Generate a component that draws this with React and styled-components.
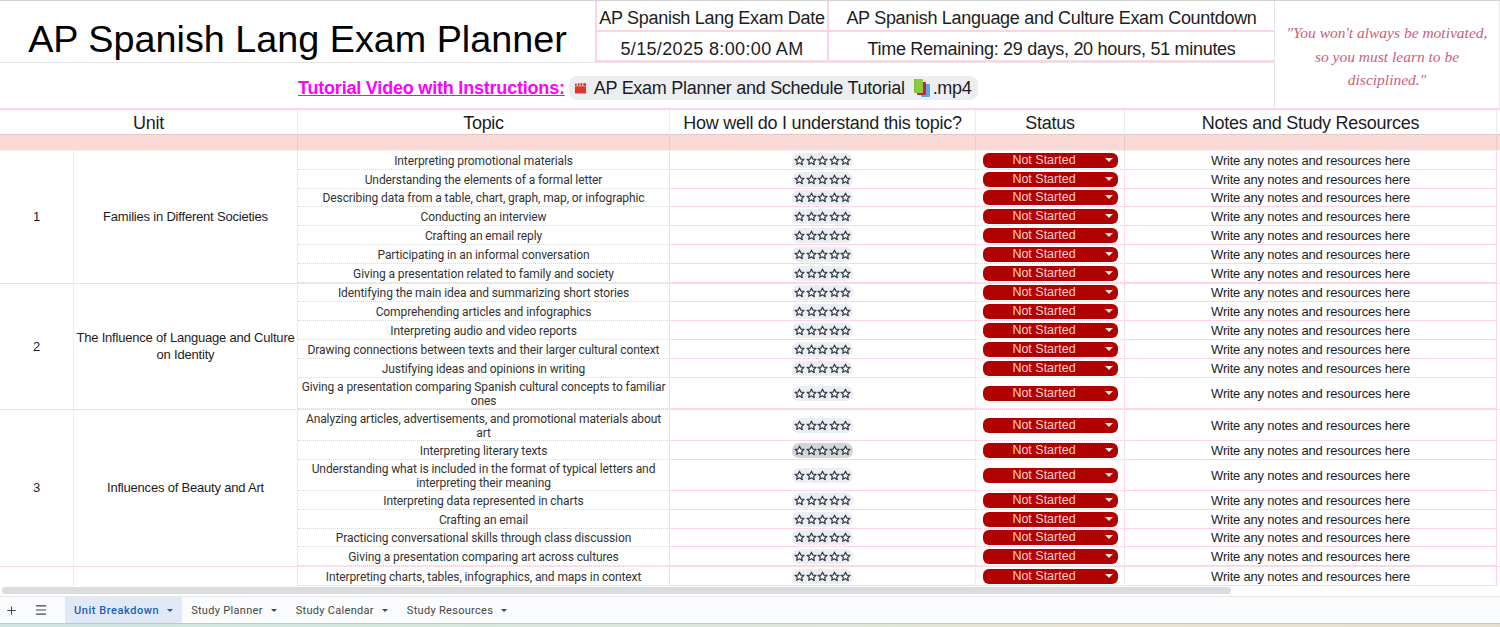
import React from 'react';
import styled, { createGlobalStyle } from 'styled-components';
import { Plus, Menu } from 'lucide-react';

const pink = '#ffd3e3';
const faint = '#ffe3ee';

const GlobalStyle = createGlobalStyle`
  html, body { margin: 0; padding: 0; background: #fff; overflow: hidden; }
  * { box-sizing: border-box; }
`;

const Page = styled.div`
  width: 1500px;
  height: 627px;
  display: flex;
  flex-direction: column;
  overflow: hidden;
  background: #fff;
  color: #1d1d1f;
  font-family: "Liberation Sans", Arial, sans-serif;
  border-top: 1px solid #d3d3d3;
`;

const Top = styled.header`
  display: flex;
  height: 109px;
  flex: none;
  border-bottom: 2px solid ${pink};
`;

const TopLeft = styled.div`
  width: 1274px;
  display: flex;
  flex-direction: column;
`;

const TitleRow = styled.div`
  display: flex;
  height: 62px;
  border-bottom: 1px solid #e6e6e6;
`;

const Title = styled.h1`
  width: 595px;
  margin: 0;
  font-size: 37.75px;
  font-weight: 400;
  line-height: 77px;
  height: 61px;
  text-align: center;
  color: #000;
  white-space: nowrap;
`;

const InfoCol = styled.div`
  display: flex;
  flex-direction: column;
  width: ${p => p.$w}px;
  border-left: 2px solid ${pink};
`;

const InfoCell = styled.div`
  height: 31px;
  line-height: 34px;
  font-size: 18px;
  letter-spacing: ${p => (p.$wide ? 0.35 : -0.3)}px;
  text-align: center;
  white-space: nowrap;
  border-bottom: 2px solid ${pink};
  &:last-child { height: 30px; }
`;

const TutorialRow = styled.div`
  flex: 1;
  display: flex;
  align-items: center;
  padding: 5px 0 0 298px;
  gap: 4px;
`;

const TutorialLink = styled.a`
  color: #ff00ff;
  font-weight: 700;
  font-size: 18px;
  letter-spacing: -0.2px;
  text-decoration: underline;
  white-space: nowrap;
`;

const FileChip = styled.span`
  display: inline-flex;
  align-items: center;
  height: 24px;
  width: 409px;
  padding: 0 5px;
  gap: 7px;
  border-radius: 8px;
  background: #eceef1;
  font-size: 18px;
  letter-spacing: -0.27px;
  white-space: nowrap;
`;

const FileExt = styled.span`
  display: inline-flex;
  align-items: center;
  gap: 1px;
`;

const Quote = styled.blockquote`
  flex: 1;
  margin: 0;
  padding: 20px 6px 0;
  border-left: 1px solid #e6e6e6;
  border-right: 1px solid #e6e6e6;
  font-family: "Liberation Serif", serif;
  font-style: italic;
  font-size: 15.5px;
  line-height: 23.5px;
  color: #c9607c;
  text-align: center;
`;

const tableCols = '298px 372px 306px 149px 372px';

const HeadRow = styled.div`
  display: grid;
  grid-template-columns: ${tableCols};
  height: 25px;
  flex: none;
  border-bottom: 1px solid #e5c8c5;
`;

const HeadCell = styled.div`
  text-align: center;
  font-size: 18px;
  letter-spacing: -0.27px;
  line-height: 27px;
  white-space: nowrap;
  border-right: 1px solid #ececec;
`;

const BandRow = styled.div`
  display: grid;
  grid-template-columns: ${tableCols};
  height: 15px;
  flex: none;
  background: #f9dad7;
`;

const BandCell = styled.div`
  border-right: 1px solid #e8cbc8;
`;

const Body = styled.div`
  flex: none;
  height: 436px;
  overflow: hidden;
  border-top: 1px solid #fbeeed;
`;

const UnitBlock = styled.section`
  display: grid;
  grid-template-columns: 74px 224px 1199px;
  border-bottom: 1px solid #ffd9e6;
`;

const UnitNo = styled.div`
  display: flex;
  align-items: center;
  justify-content: center;
  font-size: 13px;
  border-right: 1px solid ${faint};
`;

const UnitName = styled.div`
  display: flex;
  align-items: center;
  justify-content: center;
  text-align: center;
  font-size: 13px;
  letter-spacing: -0.2px;
  line-height: 17px;
  border-right: 1px solid #e9e9e9;
`;

const Rows = styled.div`
  display: flex;
  flex-direction: column;
`;

const Row = styled.div`
  display: grid;
  grid-template-columns: 372px 306px 149px 372px;
  height: ${p => (p.$tall ? 31.2 : 18.8)}px;
  align-items: stretch;
`;

const Cell = styled.div`
  display: flex;
  align-items: center;
  justify-content: center;
  text-align: center;
  padding-top: 1px;
  border-bottom: 1px solid ${pink};
  border-right: 1px solid ${faint};
`;

const TopicCell = styled(Cell)`
  font-family: Roboto, sans-serif;
  font-size: 12px;
  letter-spacing: -0.1px;
  line-height: 14px;
  color: #333;
  padding: 2px 2px 0;
  border-right: 1px solid #e6e6e6;
  border-bottom: 1px dotted #fbc8da;
`;

const StatusCell = styled(Cell)`
  border-right: 1px dotted #f8c4d8;
  border-bottom: 1px dotted #fbc8da;
`;

const NotesCell = styled(Cell)`
  font-size: 13px;
  letter-spacing: -0.2px;
  color: #1d1d1f;
  white-space: nowrap;
  border-right: 1px solid ${pink};
`;

const Stars = styled.span`
  display: inline-flex;
  align-items: center;
  justify-content: center;
  gap: 0.5px;
  width: 61px;
  height: 15px;
  border-radius: 7px;
  background: ${p => (p.$hover ? '#d3d5d8' : '#eceef1')};
`;

const Status = styled.span`
  position: relative;
  display: block;
  width: 135px;
  height: 15px;
  border-radius: 6px;
  background: #b10202;
  color: #ffcfc9;
  font-size: 12.5px;
  line-height: 15px;
  padding-right: 12px;
  &::after {
    content: '';
    position: absolute;
    right: 5px;
    top: 5px;
    border-left: 4px solid transparent;
    border-right: 4px solid transparent;
    border-top: 4px solid #ffe3df;
  }
`;

const ScrollTrack = styled.div`
  flex: none;
  height: 11px;
  padding: 1px 0 0 2px;
  border-bottom: 1px solid #e8e8e8;
  background: #fff;
`;

const ScrollThumb = styled.div`
  width: 1229px;
  height: 7px;
  border-radius: 4px;
  background: #dadce0;
`;

const TabBar = styled.nav`
  flex: none;
  height: 27px;
  display: flex;
  align-items: stretch;
  background: #f9fbfd;
  border-bottom: 1px solid #c4c7c5;
  font-family: Roboto, sans-serif;
`;

const BarIcon = styled.span`
  display: flex;
  align-items: center;
  justify-content: center;
  width: ${p => p.$w}px;
  margin-right: ${p => p.$gap || 0}px;
  color: #444746;
`;

const Tab = styled.div`
  display: flex;
  align-items: center;
  gap: 8px;
  padding: 0 ${p => (p.$active ? 9 : 8)}px;
  margin-right: ${p => (p.$active ? 1 : 3)}px;
  font-size: 11px;
  font-weight: ${p => (p.$active ? 500 : 400)};
  letter-spacing: ${p => (p.$active ? 0.55 : 0.3)}px;
  white-space: nowrap;
  color: ${p => (p.$active ? '#1b5fb4' : '#444746')};
  background: ${p => (p.$active ? '#e1e9f7' : 'transparent')};
  &::after {
    content: '';
    border-left: 3.5px solid transparent;
    border-right: 3.5px solid transparent;
    border-top: 3.5px solid currentColor;
  }
`;

const Desktop = styled.div`
  flex: 1;
  background: linear-gradient(90deg, #cfe6e2 0%, #dbe6dc 45%, #e8e4d0 75%, #e6dfcf 100%);
`;

const IconWrap = styled.svg`
  flex: none;
`;

const StarIcon = () => (
  <IconWrap width="11" height="11" viewBox="0 0 24 24" fill="#fff" stroke="#2f3a4a" strokeWidth="2.6" strokeLinejoin="round">
    <path d="M12 2.5l2.9 6.3 6.9.8-5.1 4.7 1.4 6.8L12 16.9l-6.1 3.5 1.4-6.8L2.2 9.6l6.9-.8z" />
  </IconWrap>
);

const Clapper = () => (
  <IconWrap width="13" height="14" viewBox="0 0 14 14">
    <rect x="1" y="5" width="12" height="8" rx="1" fill="#d93a2b" />
    <path d="M1 2.5h2v2H1zM4 2h2v2.5H4zM7 2h2v2.5H7zM10 2h3v2.5h-3z" fill="#c9342a" />
  </IconWrap>
);

const Books = () => (
  <IconWrap width="20" height="20" viewBox="0 0 20 20">
    <rect x="9" y="6" width="9" height="13" rx="1" fill="#5aa5e6" />
    <rect x="5" y="4" width="9" height="13" rx="1" fill="#c5233f" />
    <rect x="2" y="1" width="9" height="14" rx="1" fill="#8ccb3f" />
    <path d="M3 1v14" stroke="#6b9e2b" strokeDasharray="1 1" />
  </IconWrap>
);

const units = [
  {
    no: 1,
    name: 'Families in Different Societies',
    topics: [
      'Interpreting promotional materials',
      'Understanding the elements of a formal letter',
      'Describing data from a table, chart, graph, map, or infographic',
      'Conducting an interview',
      'Crafting an email reply',
      'Participating in an informal conversation',
      'Giving a presentation related to family and society',
    ],
  },
  {
    no: 2,
    name: 'The Influence of Language and Culture on Identity',
    topics: [
      'Identifying the main idea and summarizing short stories',
      'Comprehending articles and infographics',
      'Interpreting audio and video reports',
      'Drawing connections between texts and their larger cultural context',
      'Justifying ideas and opinions in writing',
      'Giving a presentation comparing Spanish cultural concepts to familiar ones',
    ],
  },
  {
    no: 3,
    name: 'Influences of Beauty and Art',
    topics: [
      'Analyzing articles, advertisements, and promotional materials about art',
      'Interpreting literary texts',
      'Understanding what is included in the format of typical letters and interpreting their meaning',
      'Interpreting data represented in charts',
      'Crafting an email',
      'Practicing conversational skills through class discussion',
      'Giving a presentation comparing art across cultures',
    ],
  },
  {
    no: '',
    name: '',
    topics: ['Interpreting charts, tables, infographics, and maps in context'],
  },
];

const tabs = ['Unit Breakdown', 'Study Planner', 'Study Calendar', 'Study Resources'];
const headers = ['Unit', 'Topic', 'How well do I understand this topic?', 'Status', 'Notes and Study Resources'];

const App = () => (
  <Page>
    <GlobalStyle />
    <Top>
      <TopLeft>
        <TitleRow>
          <Title>AP Spanish Lang Exam Planner</Title>
          <InfoCol $w={232}>
            <InfoCell>AP Spanish Lang Exam Date</InfoCell>
            <InfoCell $wide>5/15/2025 8:00:00 AM</InfoCell>
          </InfoCol>
          <InfoCol $w={447}>
            <InfoCell>AP Spanish Language and Culture Exam Countdown</InfoCell>
            <InfoCell>Time Remaining: 29 days, 20 hours, 51 minutes</InfoCell>
          </InfoCol>
        </TitleRow>
        <TutorialRow>
          <TutorialLink>Tutorial Video with Instructions: </TutorialLink>
          <FileChip>
            <Clapper />
            AP Exam Planner and Schedule Tutorial
            <FileExt><Books />.mp4</FileExt>
          </FileChip>
        </TutorialRow>
      </TopLeft>
      <Quote>"You won't always be motivated, so you must learn to be disciplined."</Quote>
    </Top>
    <HeadRow>
      {headers.map(h => <HeadCell key={h}>{h}</HeadCell>)}
    </HeadRow>
    <BandRow>
      {headers.map(h => <BandCell key={h} />)}
    </BandRow>
    <Body>
      {units.map(unit => (
        <UnitBlock key={unit.no || 'next'}>
          <UnitNo>{unit.no}</UnitNo>
          <UnitName>{unit.name}</UnitName>
          <Rows>
            {unit.topics.map(topic => (
              <Row key={topic} $tall={topic.length > 70}>
                <TopicCell>{topic}</TopicCell>
                <Cell>
                  <Stars $hover={topic === 'Interpreting literary texts'}>
                    {[0, 1, 2, 3, 4].map(i => <StarIcon key={i} />)}
                  </Stars>
                </Cell>
                <StatusCell><Status>Not Started</Status></StatusCell>
                <NotesCell>Write any notes and resources here</NotesCell>
              </Row>
            ))}
          </Rows>
        </UnitBlock>
      ))}
    </Body>
    <ScrollTrack><ScrollThumb /></ScrollTrack>
    <TabBar>
      <BarIcon $w={23}><Plus size={13} /></BarIcon>
      <BarIcon $w={36} $gap={6}><Menu size={14} /></BarIcon>
      {tabs.map((t, i) => <Tab key={t} $active={i === 0}>{t}</Tab>)}
    </TabBar>
    <Desktop />
  </Page>
);

export default App;
